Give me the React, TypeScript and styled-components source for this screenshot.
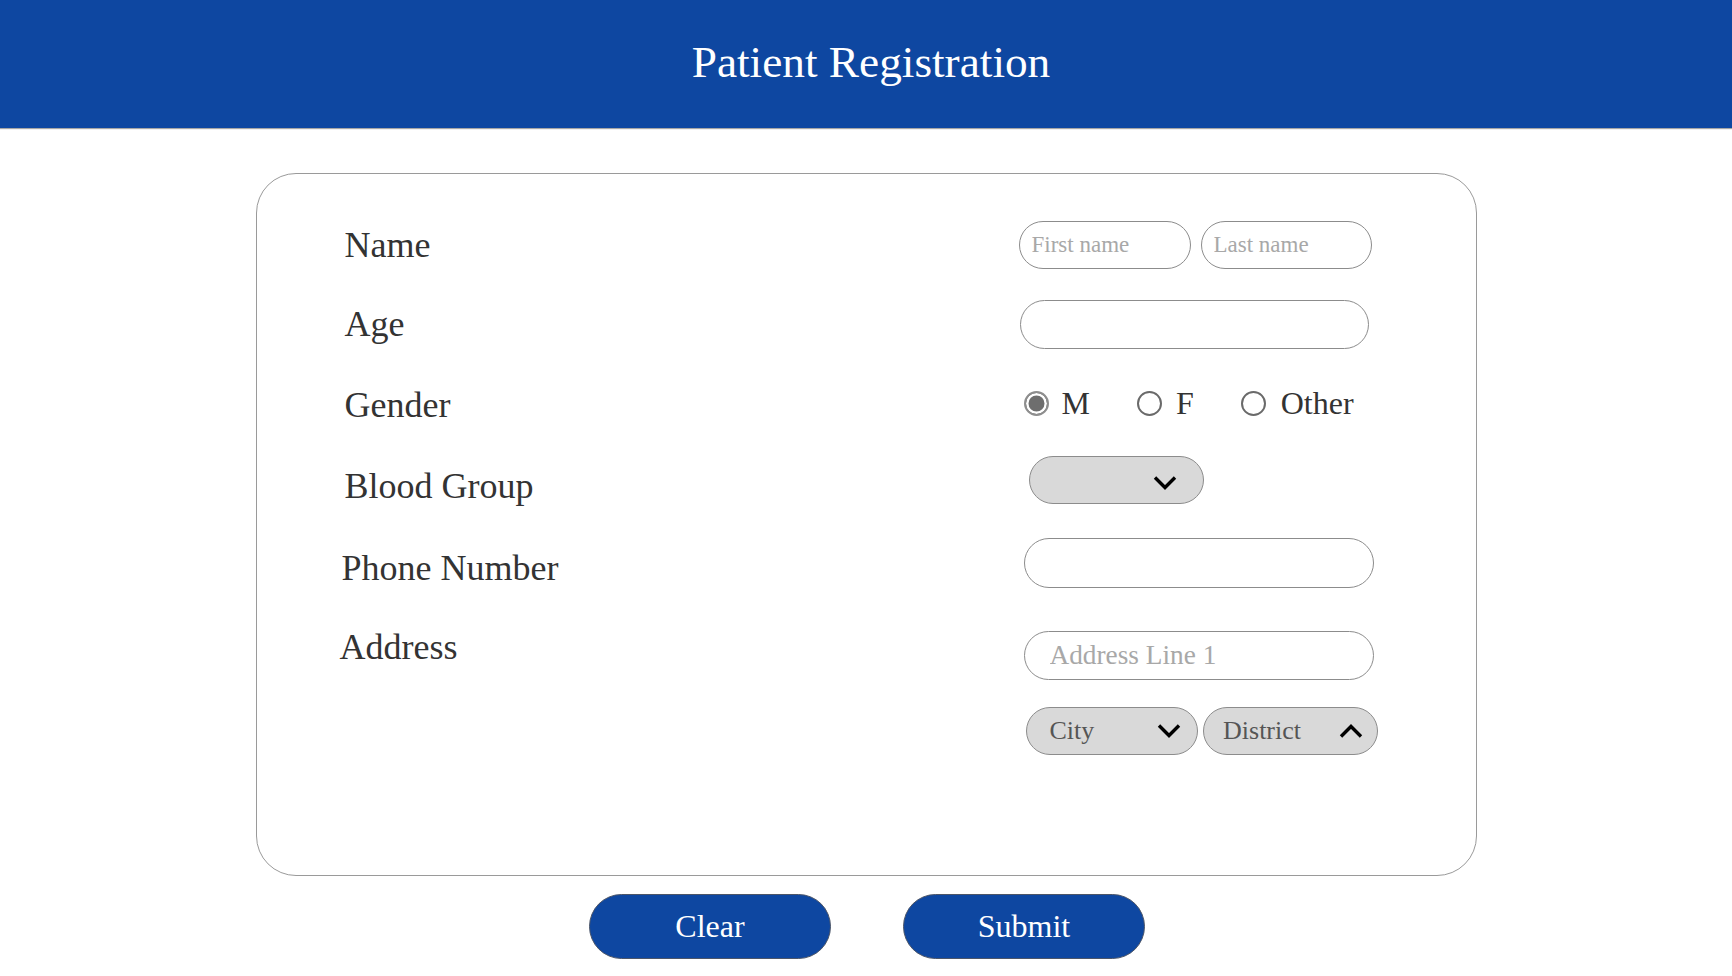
import React from "react";
import styled, { createGlobalStyle } from "styled-components";

const GlobalStyle = createGlobalStyle`
  html, body {
    margin: 0;
    padding: 0;
    background: #ffffff;
    font-family: "Liberation Serif", "Times New Roman", serif;
  }
  * { box-sizing: border-box; }
`;

const BLUE = "#0e47a1";

const Page = styled.div`
  display: flex;
  flex-direction: column;
  align-items: center;
  width: 100%;
`;

const Header = styled.header`
  width: 100%;
  height: 128px;
  background: ${BLUE};
  display: flex;
  align-items: center;
  justify-content: center;
  box-shadow: 0 1px 1px rgba(0, 0, 0, 0.35);
`;

const Title = styled.h1`
  margin: 0 0 4px 10px;
  font-family: "Liberation Serif", "Times New Roman", serif;
  font-weight: 400;
  font-size: 45.3px;
  color: #ffffff;
`;

const Card = styled.form`
  margin-top: 45px;
  width: 1221px;
  height: 703px;
  border: 1px solid #9a9a9a;
  border-radius: 40px;
  padding-top: 46px;
  display: flex;
  flex-direction: column;
`;

const Row = styled.div<{ $top: number }>`
  display: flex;
  align-items: center;
  height: 50px;
  margin-top: ${(p) => p.$top}px;
  padding-left: 88px;
`;

const Label = styled.label<{ $dy?: number; $dx?: number }>`
  flex: 1;
  font-size: 36px;
  color: #333333;
  line-height: normal;
  white-space: nowrap;
  margin-left: ${(p) => p.$dx ?? 0}px;
  margin-top: ${(p) => ((p.$dy ?? 0) > 0 ? 2 * (p.$dy ?? 0) : 0)}px;
  margin-bottom: ${(p) => ((p.$dy ?? 0) < 0 ? -2 * (p.$dy ?? 0) : 0)}px;
`;

const Controls = styled.div<{ $indent: number; $gap?: number }>`
  width: 360px;
  margin-right: 98px;
  padding-left: ${(p) => p.$indent}px;
  display: flex;
  align-items: center;
  gap: ${(p) => p.$gap ?? 0}px;
`;

const TextInput = styled.input<{ $w: number; $h: number; $fs: number; $px: number }>`
  width: ${(p) => p.$w}px;
  height: ${(p) => p.$h}px;
  border: 1px solid #8c8c8c;
  border-radius: 999px;
  background: #ffffff;
  padding: 0 ${(p) => p.$px}px;
  font-family: "Liberation Serif", "Times New Roman", serif;
  font-size: ${(p) => p.$fs}px;
  color: #333333;
  outline: none;
  &::placeholder {
    color: #a8a8a8;
  }
`;

const RadioOption = styled.label<{ $gapAfter: number; $labelGap: number }>`
  display: flex;
  align-items: center;
  gap: ${(p) => p.$labelGap}px;
  margin-right: ${(p) => p.$gapAfter}px;
  font-size: 32px;
  color: #333333;
  line-height: normal;
`;

const Radio = styled.input.attrs({ type: "radio" })`
  appearance: none;
  -webkit-appearance: none;
  margin: 0;
  width: 25px;
  height: 25px;
  border-radius: 50%;
  border: 2.5px solid #6a6a6a;
  background: #ffffff;
  flex-shrink: 0;
  &:checked {
    border: 2px solid #8e8e8e;
    background: #6e6e6e;
    box-shadow: inset 0 0 0 2.5px #ffffff;
  }
`;

const Select = styled.div<{ $w: number; $pl: number; $pr: number }>`
  width: ${(p) => p.$w}px;
  height: 48px;
  border: 1px solid #8c8c8c;
  border-radius: 999px;
  background: #d9d9d9;
  display: flex;
  align-items: center;
  justify-content: space-between;
  padding: 0 ${(p) => p.$pr}px 0 ${(p) => p.$pl}px;
  font-size: 26px;
  color: #555555;
  cursor: pointer;
`;

const SelectText = styled.span`
  line-height: normal;
`;

const ChevronBox = styled.span<{ $dy: number }>`
  display: flex;
  margin-top: ${(p) => p.$dy}px;
`;

const Buttons = styled.div`
  display: flex;
  gap: 72px;
  margin-top: 18px;
  margin-left: 2px;
`;

const Button = styled.button`
  width: 242px;
  height: 65px;
  border-radius: 999px;
  border: 1px solid #4d5668;
  background: ${BLUE};
  color: #ffffff;
  font-family: "Liberation Serif", "Times New Roman", serif;
  font-size: 32px;
  cursor: pointer;
`;

const Chevron: React.FC<{ up?: boolean; dy?: number }> = ({ up, dy = 0 }) => (
  <ChevronBox $dy={dy}>
    <svg width="24" height="14" viewBox="0 0 24 14" aria-hidden="true">
      <polyline
        points={up ? "2,12.5 12,2.5 22,12.5" : "2,1.5 12,11.5 22,1.5"}
        fill="none"
        stroke="#000000"
        strokeWidth="3.4"
        strokeLinejoin="miter"
      />
    </svg>
  </ChevronBox>
);

export default function App() {
  const [gender, setGender] = React.useState("M");
  const options = [
    { v: "M", g: 47, lg: 13 },
    { v: "F", g: 47, lg: 14 },
    { v: "Other", g: 0, lg: 15 },
  ];
  return (
    <Page>
      <GlobalStyle />
      <Header>
        <Title>Patient Registration</Title>
      </Header>
      <Card onSubmit={(e) => e.preventDefault()}>
        <Row $top={0}>
          <Label>Name</Label>
          <Controls $indent={1} $gap={10}>
            <TextInput $w={172} $h={48} $fs={23} $px={12} placeholder="First name" />
            <TextInput $w={171} $h={48} $fs={23} $px={12} placeholder="Last name" />
          </Controls>
        </Row>
        <Row $top={29}>
          <Label>Age</Label>
          <Controls $indent={2}>
            <TextInput $w={349} $h={49} $fs={23} $px={12} />
          </Controls>
        </Row>
        <Row $top={29}>
          <Label $dy={2}>Gender</Label>
          <Controls $indent={6}>
            {options.map((o) => (
              <RadioOption key={o.v} $gapAfter={o.g} $labelGap={o.lg}>
                <Radio
                  name="gender"
                  checked={gender === o.v}
                  onChange={() => setGender(o.v)}
                />
                {o.v}
              </RadioOption>
            ))}
          </Controls>
        </Row>
        <Row $top={27}>
          <Label $dy={6}>Blood Group</Label>
          <Controls $indent={11}>
            <Select $w={175} $pl={20} $pr={26}>
              <SelectText />
              <Chevron dy={6} />
            </Select>
          </Controls>
        </Row>
        <Row $top={33}>
          <Label $dy={5} $dx={-3}>Phone Number</Label>
          <Controls $indent={6}>
            <TextInput $w={350} $h={50} $fs={23} $px={12} />
          </Controls>
        </Row>
        <Row $top={42}>
          <Label $dy={-8} $dx={-5}>Address</Label>
          <Controls $indent={6}>
            <TextInput $w={350} $h={49} $fs={27.3} $px={25} placeholder="Address Line 1" />
          </Controls>
        </Row>
        <Row $top={26}>
          <Label />
          <Controls $indent={8} $gap={5}>
            <Select $w={173} $pl={23} $pr={16}>
              <SelectText>City</SelectText>
              <Chevron />
            </Select>
            <Select $w={175} $pl={19} $pr={14}>
              <SelectText>District</SelectText>
              <Chevron up />
            </Select>
          </Controls>
        </Row>
      </Card>
      <Buttons>
        <Button type="button">Clear</Button>
        <Button type="button">Submit</Button>
      </Buttons>
    </Page>
  );
}
